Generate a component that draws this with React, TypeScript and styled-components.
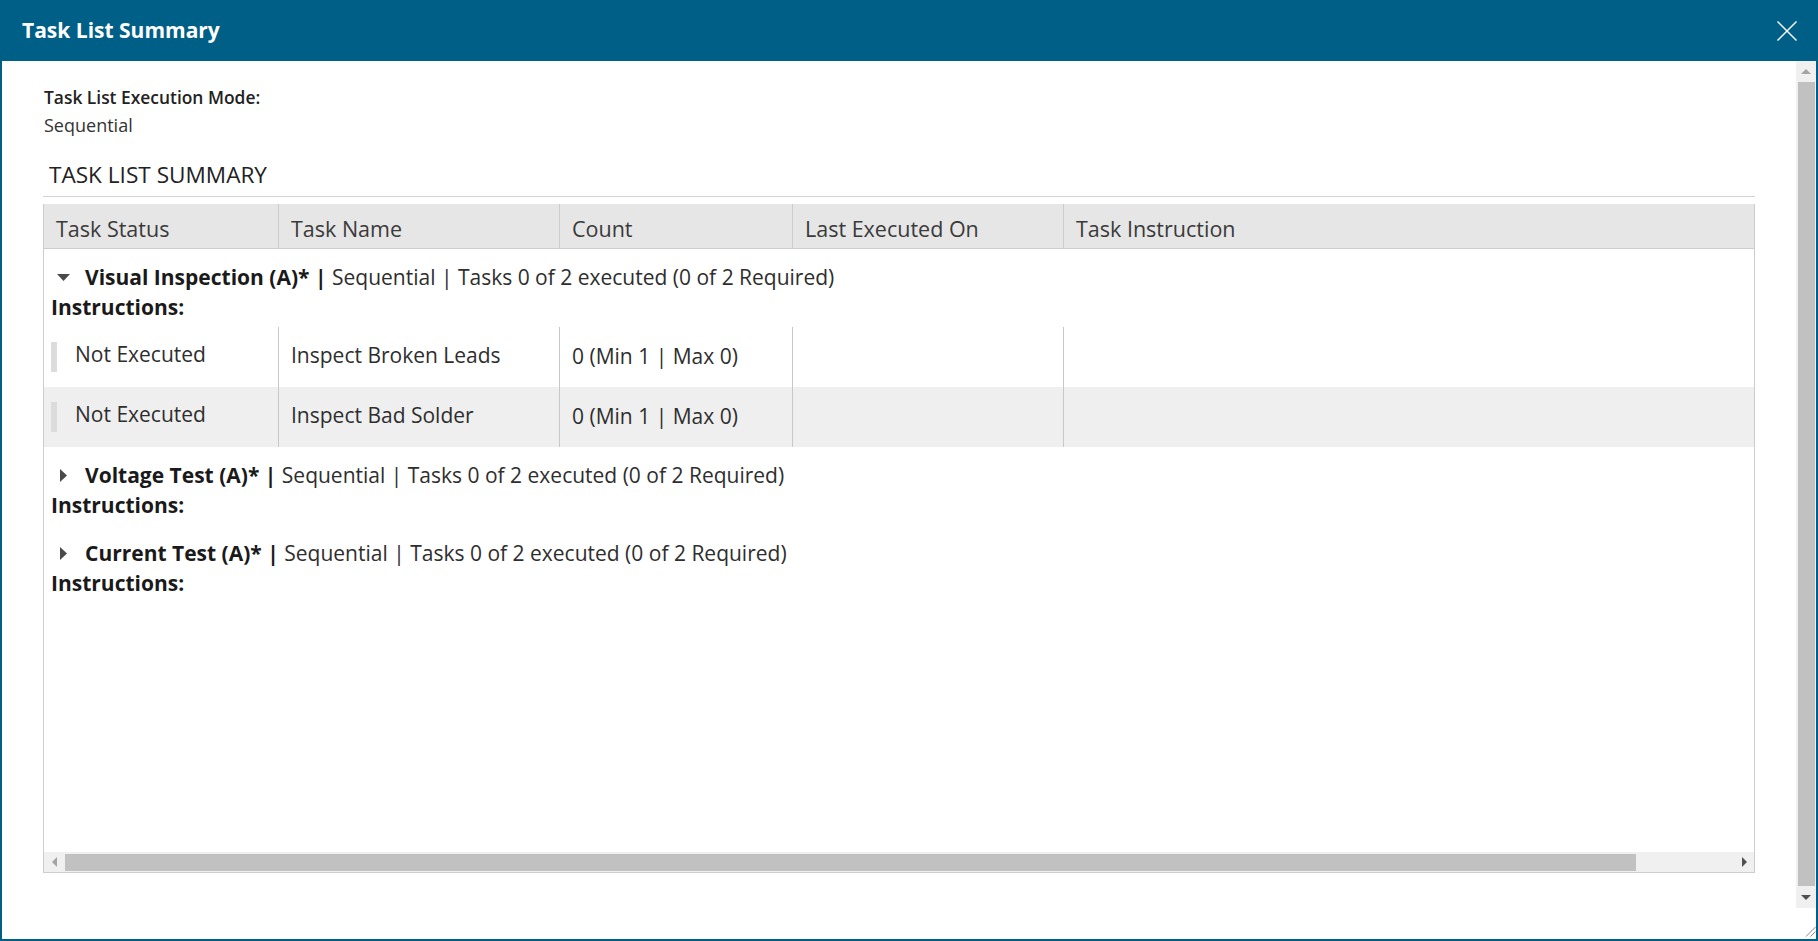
import React from "react";
import styled, { createGlobalStyle } from "styled-components";

const GlobalStyle = createGlobalStyle`
  html, body { margin: 0; padding: 0; background: #ffffff; }
  body { font-family: "Open Sans", "Noto Sans", "DejaVu Sans", sans-serif; }
  * { box-sizing: border-box; }
`;

const TEAL = "#005f87";
const COLS = "235px 281px 233px 271px 1fr";

const Dialog = styled.div`
  width: 1818px;
  height: 941px;
  display: flex;
  flex-direction: column;
  border: 2px solid ${TEAL};
  border-top: 0;
  background: #fff;
`;

const TitleBar = styled.header`
  flex: none;
  height: 61px;
  margin: 0 -2px;
  background: ${TEAL};
  display: flex;
  align-items: center;
  justify-content: space-between;
  padding: 0 21px 1px 22px;
`;

const TitleText = styled.h1`
  margin: 0;
  font-size: 21px;
  font-weight: 700;
  color: #ffffff;
  line-height: 28px;
`;

const CloseButton = styled.button`
  width: 20px;
  height: 20px;
  padding: 0;
  border: 0;
  background: transparent;
  display: flex;
  margin-top: 2px;
  cursor: pointer;
`;

const Body = styled.div`
  flex: 1;
  min-height: 0;
  display: flex;
`;

const Content = styled.main`
  flex: 1;
  min-width: 0;
  display: flex;
  flex-direction: column;
  padding: 22px 41px 66px 41px;
`;

const ModeLabel = styled.div`
  font-size: 17.4px;
  font-weight: 600;
  line-height: 28px;
  color: #222;
  padding-left: 1px;
`;

const ModeValue = styled.div`
  font-size: 18px;
  line-height: 28px;
  color: #333;
  padding-left: 1px;
`;

const SectionTitle = styled.h2`
  margin: 21px 0 0 0;
  padding: 0 0 6px 6px;
  font-size: 22.6px;
  font-weight: 400;
  line-height: 30px;
  color: #222;
  border-bottom: 1px solid #d3d3d3;
`;

const Grid = styled.section`
  margin-top: 7px;
  flex: 1;
  min-height: 0;
  display: flex;
  flex-direction: column;
  border: 1px solid #cdcdcd;
  border-top: 0;
`;

const HeaderRow = styled.div`
  flex: none;
  height: 45px;
  display: grid;
  grid-template-columns: ${COLS};
  background: #e6e6e6;
  border-bottom: 1px solid #cccccc;
`;

const HeaderCell = styled.div<{ $last?: boolean }>`
  display: flex;
  align-items: center;
  padding: 4px 0 0 12px;
  font-size: 21.5px;
  color: #3a3a3a;
  white-space: nowrap;
  border-right: ${(p) => (p.$last ? "0" : "1px solid #cdcdcd")};
`;

const GridBody = styled.div`
  flex: 1;
  min-height: 0;
  overflow: hidden;
`;

const Group = styled.div`
  padding-top: 13px;
`;

const GroupHead = styled.div`
  padding-bottom: 5px;
`;

const GroupTitle = styled.div`
  height: 30px;
  display: flex;
  align-items: center;
  padding-left: 8px;
  font-size: 21px;
  white-space: nowrap;
`;

const Toggle = styled.span`
  width: 22px;
  height: 30px;
  display: flex;
  align-items: center;
  justify-content: center;
  flex: none;
`;

const GroupText = styled.span`
  margin-left: 11px;
  line-height: 30px;
`;

const Strong = styled.span`
  font-weight: 700;
  color: #1a1a1a;
`;

const Plain = styled.span`
  color: #2e2e2e;
`;

const Instructions = styled.div`
  height: 30px;
  line-height: 30px;
  padding-left: 7px;
  font-size: 21px;
  font-weight: 700;
  color: #1a1a1a;
`;

const Row = styled.div<{ $alt?: boolean }>`
  height: 60px;
  display: grid;
  grid-template-columns: ${COLS};
  background: ${(p) => (p.$alt ? "#efefef" : "#ffffff")};
`;

const Cell = styled.div<{ $last?: boolean; $status?: boolean }>`
  display: flex;
  align-items: center;
  padding-left: ${(p) => (p.$status ? "7px" : "12px")};
  font-size: 21px;
  color: #2e2e2e;
  white-space: nowrap;
  border-right: ${(p) => (p.$last ? "0" : "1px solid #c8c8c8")};
`;

const StatusBar = styled.span`
  width: 6px;
  height: 30px;
  background: #dcdcdc;
  flex: none;
`;

const CellText = styled.span<{ $lift: number; $gap?: number }>`
  padding-bottom: ${(p) => p.$lift}px;
  margin-left: ${(p) => p.$gap ?? 0}px;
  line-height: 28px;
`;

const HScroll = styled.div`
  flex: none;
  height: 20px;
  display: flex;
  background: #f0f0f0;
`;

const ScrollButton = styled.div<{ $w: number; $h: number }>`
  flex: none;
  width: ${(p) => p.$w}px;
  height: ${(p) => p.$h}px;
  display: flex;
  align-items: center;
  justify-content: center;
`;

const HThumb = styled.div`
  flex: none;
  width: 1571px;
  margin: 2px 0 1px 0;
  background: #c1c1c1;
`;

const Spacer = styled.div`
  flex: 1;
`;

const VScroll = styled.aside`
  flex: none;
  width: 20px;
  display: flex;
  flex-direction: column;
`;

const VTrack = styled.div`
  flex: 1;
  display: flex;
  flex-direction: column;
  background: #f0f0f0;
`;

const VThumb = styled.div`
  flex: 1;
  margin: 0 1px 0 2px;
  background: #c1c1c1;
`;

const GripArea = styled.div`
  flex: none;
  height: 31px;
  display: flex;
  align-items: flex-end;
  justify-content: flex-end;
  padding: 0 0 2px 0;
`;

const CaretDown = () => (
  <svg width="13" height="7" viewBox="0 0 13 7">
    <polygon points="0,0 13,0 6.5,7" fill="#4a4a4a" />
  </svg>
);

const CaretRight = () => (
  <svg width="7" height="13" viewBox="0 0 7 13">
    <polygon points="0,0 7,6.5 0,13" fill="#4a4a4a" />
  </svg>
);

type Task = { status: string; name: string; count: string };
type TaskGroup = { name: string; mode: string; summary: string; open: boolean; tasks: Task[] };

const groups: TaskGroup[] = [
  {
    name: "Visual Inspection (A)*",
    mode: "Sequential",
    summary: "Tasks 0 of 2 executed (0 of 2 Required)",
    open: true,
    tasks: [
      { status: "Not Executed", name: "Inspect Broken Leads", count: "0 (Min 1 | Max 0)" },
      { status: "Not Executed", name: "Inspect Bad Solder", count: "0 (Min 1 | Max 0)" },
    ],
  },
  {
    name: "Voltage Test (A)*",
    mode: "Sequential",
    summary: "Tasks 0 of 2 executed (0 of 2 Required)",
    open: false,
    tasks: [],
  },
  {
    name: "Current Test (A)*",
    mode: "Sequential",
    summary: "Tasks 0 of 2 executed (0 of 2 Required)",
    open: false,
    tasks: [],
  },
];

const headers = ["Task Status", "Task Name", "Count", "Last Executed On", "Task Instruction"];

export default function App() {
  return (
    <>
      <GlobalStyle />
      <Dialog>
        <TitleBar>
          <TitleText>Task List Summary</TitleText>
          <CloseButton aria-label="Close">
            <svg width="20" height="20" viewBox="0 0 20 20">
              <line x1="0.5" y1="0.5" x2="19.5" y2="19.5" stroke="#fff" strokeWidth="1.4" />
              <line x1="19.5" y1="0.5" x2="0.5" y2="19.5" stroke="#fff" strokeWidth="1.4" />
            </svg>
          </CloseButton>
        </TitleBar>
        <Body>
          <Content>
            <ModeLabel>Task List Execution Mode:</ModeLabel>
            <ModeValue>Sequential</ModeValue>
            <SectionTitle>TASK LIST SUMMARY</SectionTitle>
            <Grid>
              <HeaderRow>
                {headers.map((h, i) => (
                  <HeaderCell key={h} $last={i === headers.length - 1}>
                    {h}
                  </HeaderCell>
                ))}
              </HeaderRow>
              <GridBody>
                {groups.map((g) => (
                  <Group key={g.name}>
                    <GroupHead>
                      <GroupTitle>
                        <Toggle>{g.open ? <CaretDown /> : <CaretRight />}</Toggle>
                        <GroupText>
                          <Strong>{g.name} |</Strong>
                          <Plain>
                            {" "}
                            {g.mode} | {g.summary}
                          </Plain>
                        </GroupText>
                      </GroupTitle>
                      <Instructions>Instructions:</Instructions>
                    </GroupHead>
                    {g.open &&
                      g.tasks.map((t, i) => (
                        <Row key={t.name} $alt={i % 2 === 1}>
                          <Cell $status>
                            <StatusBar />
                            <CellText $lift={6} $gap={18}>
                              {t.status}
                            </CellText>
                          </Cell>
                          <Cell>
                            <CellText $lift={4}>{t.name}</CellText>
                          </Cell>
                          <Cell>
                            <CellText $lift={3}>{t.count}</CellText>
                          </Cell>
                          <Cell />
                          <Cell $last />
                        </Row>
                      ))}
                  </Group>
                ))}
              </GridBody>
              <HScroll>
                <ScrollButton $w={21} $h={20}>
                  <svg width="5" height="10" viewBox="0 0 5 10">
                    <polygon points="5,0 5,10 0,5" fill="#a3a3a3" />
                  </svg>
                </ScrollButton>
                <HThumb />
                <Spacer />
                <ScrollButton $w={20} $h={20}>
                  <svg width="5" height="10" viewBox="0 0 5 10">
                    <polygon points="0,0 0,10 5,5" fill="#505050" />
                  </svg>
                </ScrollButton>
              </HScroll>
            </Grid>
          </Content>
          <VScroll>
            <VTrack>
              <ScrollButton $w={20} $h={21}>
                <svg width="10" height="5" viewBox="0 0 10 5">
                  <polygon points="0,5 10,5 5,0" fill="#a3a3a3" />
                </svg>
              </ScrollButton>
              <VThumb />
              <ScrollButton $w={20} $h={22}>
                <svg width="10" height="5" viewBox="0 0 10 5">
                  <polygon points="0,0 10,0 5,5" fill="#505050" />
                </svg>
              </ScrollButton>
            </VTrack>
            <GripArea>
              <svg width="11" height="11" viewBox="0 0 11 11">
                <line x1="10.5" y1="1" x2="1" y2="10.5" stroke="#8a8a8a" strokeWidth="1" />
                <line x1="10.5" y1="5.5" x2="5.5" y2="10.5" stroke="#8a8a8a" strokeWidth="1" />
              </svg>
            </GripArea>
          </VScroll>
        </Body>
      </Dialog>
    </>
  );
}
